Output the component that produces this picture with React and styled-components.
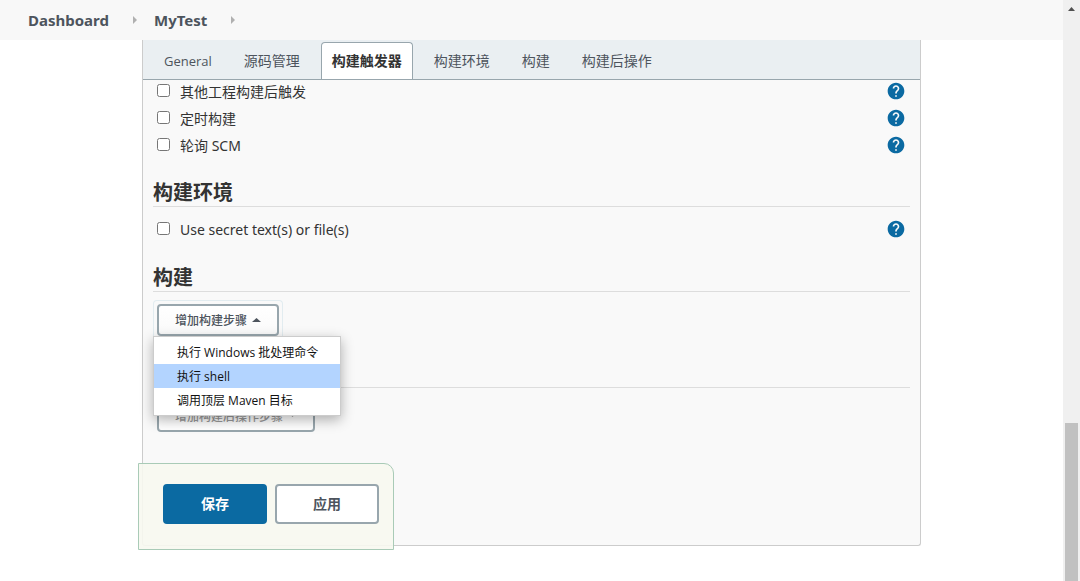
import React from "react";
import styled, { createGlobalStyle, css } from "styled-components";
import { MdHelp } from "react-icons/md";

const GlobalStyle = createGlobalStyle`
  * { box-sizing: border-box; }
  body {
    margin: 0;
    background: #fff;
    color: #333;
    font-family: "Open Sans", "Noto Sans CJK SC", sans-serif;
    font-size: 14px;
    line-height: 20px;
  }
  button { font-family: inherit; margin: 0; cursor: pointer; }
  ul, ol { list-style: none; margin: 0; padding: 0; }
`;

const Page = styled.div`
  display: flex;
  min-height: 100vh;
`;

const Main = styled.div`
  flex: 1;
  min-width: 0;
`;

const Breadcrumbs = styled.ol`
  display: flex;
  align-items: center;
  height: 40px;
  padding: 0 28px;
  background: #f8f8f8;
`;

const Crumb = styled.li`
  display: flex;
  align-items: center;
`;

const CrumbLink = styled.a`
  color: #4d545d;
  font-family: "Noto Sans", sans-serif;
  font-size: 15px;
  font-weight: 700;
  text-decoration: none;
`;

const CrumbArrow = styled.svg`
  width: 4px;
  height: 8px;
  margin: 0 17px 0 24px;
  fill: #b0b0b0;
`;

const Panel = styled.section`
  position: relative;
  margin: 0 142px 32px;
  border: 1px solid #ccc;
  border-top: 0;
  border-radius: 0 0 3px 3px;
  background: #f9f9f9;
`;

const TabBar = styled.nav`
  display: flex;
  align-items: flex-end;
  gap: 10px;
  height: 40px;
  padding: 0 10px;
  background: #eaeff2;
  border-bottom: 1px solid #98a6ad;
`;

const Tab = styled.a`
  height: 37px;
  padding: 8px 10px;
  border: 1px solid transparent;
  border-bottom: 0;
  border-radius: 4px 4px 0 0;
  color: #4d545d;
  font-size: ${(p) => (p.$latin ? 13 : 14)}px;
  text-decoration: none;
  white-space: nowrap;
  ${(p) =>
    p.$active &&
    css`
      background: #fff;
      border-color: #98a6ad;
      color: #333;
      font-weight: 700;
    `}
`;

const Form = styled.form`
  padding: 0 10px 112px;
`;

const OptionList = styled.div`
  display: flex;
  flex-direction: column;
  gap: 5px;
  margin: ${(p) => (p.$afterHeading ? "11px 0 23px" : "0")};
`;

const OptionRow = styled.div`
  display: flex;
  align-items: center;
  height: 22px;
  padding: 0 4px;
`;

const Checkbox = styled.input`
  width: 13px;
  height: 13px;
  margin: 0 10px 2px 0;
`;

const OptionLabel = styled.label`
  flex: 1;
  padding-top: 2px;
  font-family: "Noto Sans", "Noto Sans CJK SC", sans-serif;
  font-size: 14px;
`;

const HelpButton = styled.button`
  display: flex;
  padding: 0;
  border: 0;
  background: none;
  color: #0b6aa2;
  font-size: 20px;
`;

const Heading = styled.h2`
  min-height: 29px;
  margin: 22px 0 0;
  padding-top: 2px;
  border-bottom: 1px solid #ddd;
  font-size: 20px;
  line-height: 26px;
  font-weight: 700;
`;

const MenuAnchor = styled.div`
  position: relative;
  width: fit-content;
  margin-top: 8px;
  padding: 3px 3px 1px;
  border: 1px solid ${(p) => (p.$open ? "#e2ecf0" : "transparent")};
  border-bottom: 0;
  border-radius: 4px 4px 0 0;
`;

const MenuButton = styled.button`
  display: flex;
  align-items: center;
  gap: 5px;
  height: 32px;
  padding: 0 16px;
  border: 2px solid #98a6ad;
  border-radius: 4px;
  background: ${(p) => (p.$open ? "linear-gradient(#fff, #fafafa)" : "#fff")};
  color: ${(p) => (p.$open ? "#4d545d" : "#999")};
  font-size: 12px;
  font-weight: 500;
`;

const Caret = styled.svg`
  width: 9px;
  height: 4px;
  fill: currentColor;
`;

const Menu = styled.ul`
  position: absolute;
  top: 35px;
  left: -1px;
  z-index: 2;
  width: 188px;
  padding: 3px 0;
  border: 1px solid #ccc;
  background: #fff;
  box-shadow: 0 4px 12px rgba(0, 0, 0, 0.3);
`;

const MenuItem = styled.li`
  background: ${(p) => (p.$selected ? "#b3d4ff" : "transparent")};
`;

const MenuLink = styled.a`
  display: block;
  padding: 2px 23px 0;
  color: #111;
  font-size: 12px;
  line-height: 22px;
  text-decoration: none;
  white-space: nowrap;
`;

const ActionBar = styled.div`
  position: absolute;
  left: -5px;
  bottom: -5px;
  display: flex;
  gap: 8px;
  padding: 20px 14px 25px 24px;
  border: 1px solid #a9cbb7;
  border-radius: 0 10px 0 0;
  background: rgba(247, 248, 239, 0.9);
`;

const ActionButton = styled.button`
  width: 104px;
  height: 40px;
  padding: 0 0 2px;
  border: 2px solid ${(p) => (p.$primary ? "#0b6aa2" : "#98a6ad")};
  border-radius: 4px;
  background: ${(p) => (p.$primary ? "#0b6aa2" : "#fff")};
  color: ${(p) => (p.$primary ? "#fff" : "#4d545d")};
  font-size: 14px;
  font-weight: ${(p) => (p.$primary ? 700 : 600)};
`;

const ScrollTrack = styled.div`
  position: sticky;
  top: 0;
  display: flex;
  flex-direction: column;
  align-items: center;
  justify-content: space-between;
  width: 17px;
  height: 100vh;
  padding-top: 7px;
  background: #f0f0f0;
`;

const ScrollArrow = styled.svg`
  width: 7px;
  height: 4px;
  fill: #505050;
`;

const ScrollThumb = styled.div`
  width: 13px;
  height: 158px;
  background: #c1c1c1;
`;

const tabs = ["General", "源码管理", "构建触发器", "构建环境", "构建", "构建后操作"];
const triggers = ["其他工程构建后触发", "定时构建", "轮询 SCM"];
const steps = ["执行 Windows 批处理命令", "执行 shell", "调用顶层 Maven 目标"];

function Option({ id, label }) {
  return (
    <OptionRow>
      <Checkbox type="checkbox" id={id} />
      <OptionLabel htmlFor={id}>{label}</OptionLabel>
      <HelpButton type="button" aria-label={label}>
        <MdHelp />
      </HelpButton>
    </OptionRow>
  );
}

export default function App() {
  return (
    <Page>
      <GlobalStyle />
      <Main>
        <Breadcrumbs>
          {["Dashboard", "MyTest"].map((name) => (
            <Crumb key={name}>
              <CrumbLink href="#">{name}</CrumbLink>
              <CrumbArrow viewBox="0 0 4 8">
                <path d="M0 0L4 4L0 8Z" />
              </CrumbArrow>
            </Crumb>
          ))}
        </Breadcrumbs>
        <Panel>
          <TabBar>
            {tabs.map((name, i) => (
              <Tab key={name} href="#" $active={i === 2} $latin={i === 0}>
                {name}
              </Tab>
            ))}
          </TabBar>
          <Form onSubmit={(e) => e.preventDefault()}>
            <OptionList>
              {triggers.map((label, i) => (
                <Option key={label} id={`trigger-${i}`} label={label} />
              ))}
            </OptionList>
            <Heading>构建环境</Heading>
            <OptionList $afterHeading>
              <Option id="secrets" label="Use secret text(s) or file(s)" />
            </OptionList>
            <Heading>构建</Heading>
            <MenuAnchor $open>
              <MenuButton type="button" $open aria-expanded="true">
                增加构建步骤
                <Caret viewBox="0 0 9 4">
                  <path d="M0 4L4.5 0L9 4Z" />
                </Caret>
              </MenuButton>
              <Menu>
                {steps.map((label, i) => (
                  <MenuItem key={label} $selected={i === 1}>
                    <MenuLink href="#">{label}</MenuLink>
                  </MenuItem>
                ))}
              </Menu>
            </MenuAnchor>
            <Heading aria-label="构建后操作" />
            <MenuAnchor>
              <MenuButton type="button">
                增加构建后操作步骤
                <Caret viewBox="0 0 9 4">
                  <path d="M1.5 0L4.5 3L7.5 0Z" />
                </Caret>
              </MenuButton>
            </MenuAnchor>
            <ActionBar>
              <ActionButton type="submit" $primary>
                保存
              </ActionButton>
              <ActionButton type="button">应用</ActionButton>
            </ActionBar>
          </Form>
        </Panel>
      </Main>
      <ScrollTrack aria-hidden="true">
        <ScrollArrow viewBox="0 0 7 4">
          <path d="M0 4L3.5 0L7 4Z" />
        </ScrollArrow>
        <ScrollThumb />
      </ScrollTrack>
    </Page>
  );
}
